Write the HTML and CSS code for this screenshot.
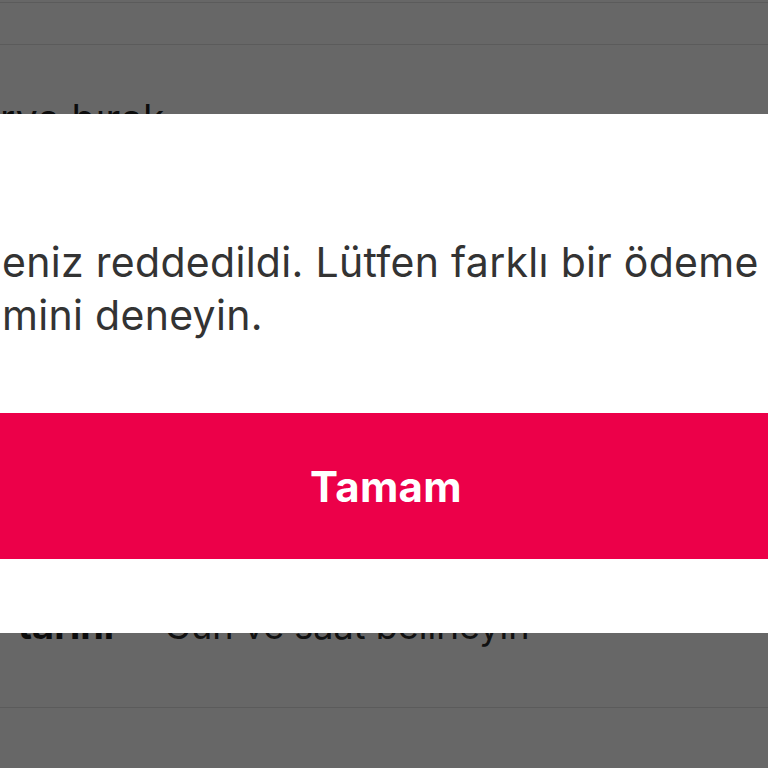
FILE: index.html
```html
<!DOCTYPE html>
<html lang="tr">
<head>
<meta charset="utf-8">
<title>Ödeme reddedildi</title>
<link rel="stylesheet" href="styles.css">
</head>
<body>
<div class="page">
  <div class="topline"></div>
  <div class="header"></div>
  <div class="note">rya bırak</div>
  <div class="date"><b class="date-label">tarihi</b><span class="date-hint">Gün ve saat belirleyin</span></div>
  <div class="divider"></div>
</div>
<div class="overlay"></div>
<div class="modal" role="dialog">
  <div class="msg">
    <div class="msg-line">eniz reddedildi. Lütfen farklı bir ödeme</div>
    <div class="msg-line">mini deneyin.</div>
  </div>
  <button class="btn" type="button">Tamam</button>
</div>
</body>
</html>
```
FILE: styles.css
```css
html, body {
  margin: 0;
  padding: 0;
  background: #ffffff;
  height: 100%;
  overflow: hidden;
}
body {
  font-family: Inter, "Liberation Sans", Arial, sans-serif;
  color: #222222;
}
.page {
  display: flex;
  flex-direction: column;
}
.topline {
  height: 2px;
  border-bottom: 1px solid #e2e2e2;
}
.header {
  height: 41px;
  border-bottom: 1px solid #e2e2e2;
}
.note {
  margin-top: 52px;
  font-size: 39px;
  line-height: 44px;
  letter-spacing: 0.4px;
  white-space: nowrap;
  color: #1e1e1e;
}
.date {
  margin-top: 462px;
  line-height: 44px;
  white-space: nowrap;
  padding-left: 18px;
  display: flex;
  align-items: baseline;
  gap: 50px;
  color: #1e1e1e;
}
.date-label {
  font-size: 38px;
  font-weight: 700;
}
.date-hint {
  font-size: 36px;
  font-weight: 400;
  color: #2a2a2a;
}
.divider {
  margin-top: 59px;
  border-bottom: 1px solid #e2e2e2;
}
.overlay {
  position: fixed;
  inset: 0;
  background: rgba(0, 0, 0, 0.596);
}
.modal {
  position: fixed;
  top: 114px;
  left: 0;
  right: 0;
  height: 519px;
  background: #ffffff;
  display: flex;
  flex-direction: column;
}
.msg {
  padding-top: 122px;
  padding-left: 2px;
  font-size: 41px;
  line-height: 53px;
  letter-spacing: 0.3px;
  color: #333333;
  white-space: nowrap;
}
.btn {
  margin-top: 71px;
  height: 146px;
  width: 100%;
  border: none;
  background: #ec0049;
  color: #ffffff;
  font-family: Inter, "Liberation Sans", Arial, sans-serif;
  font-size: 42px;
  font-weight: 700;
  letter-spacing: 0.3px;
  display: flex;
  align-items: center;
  justify-content: center;
  padding: 0 0 0 4px;
}
```
